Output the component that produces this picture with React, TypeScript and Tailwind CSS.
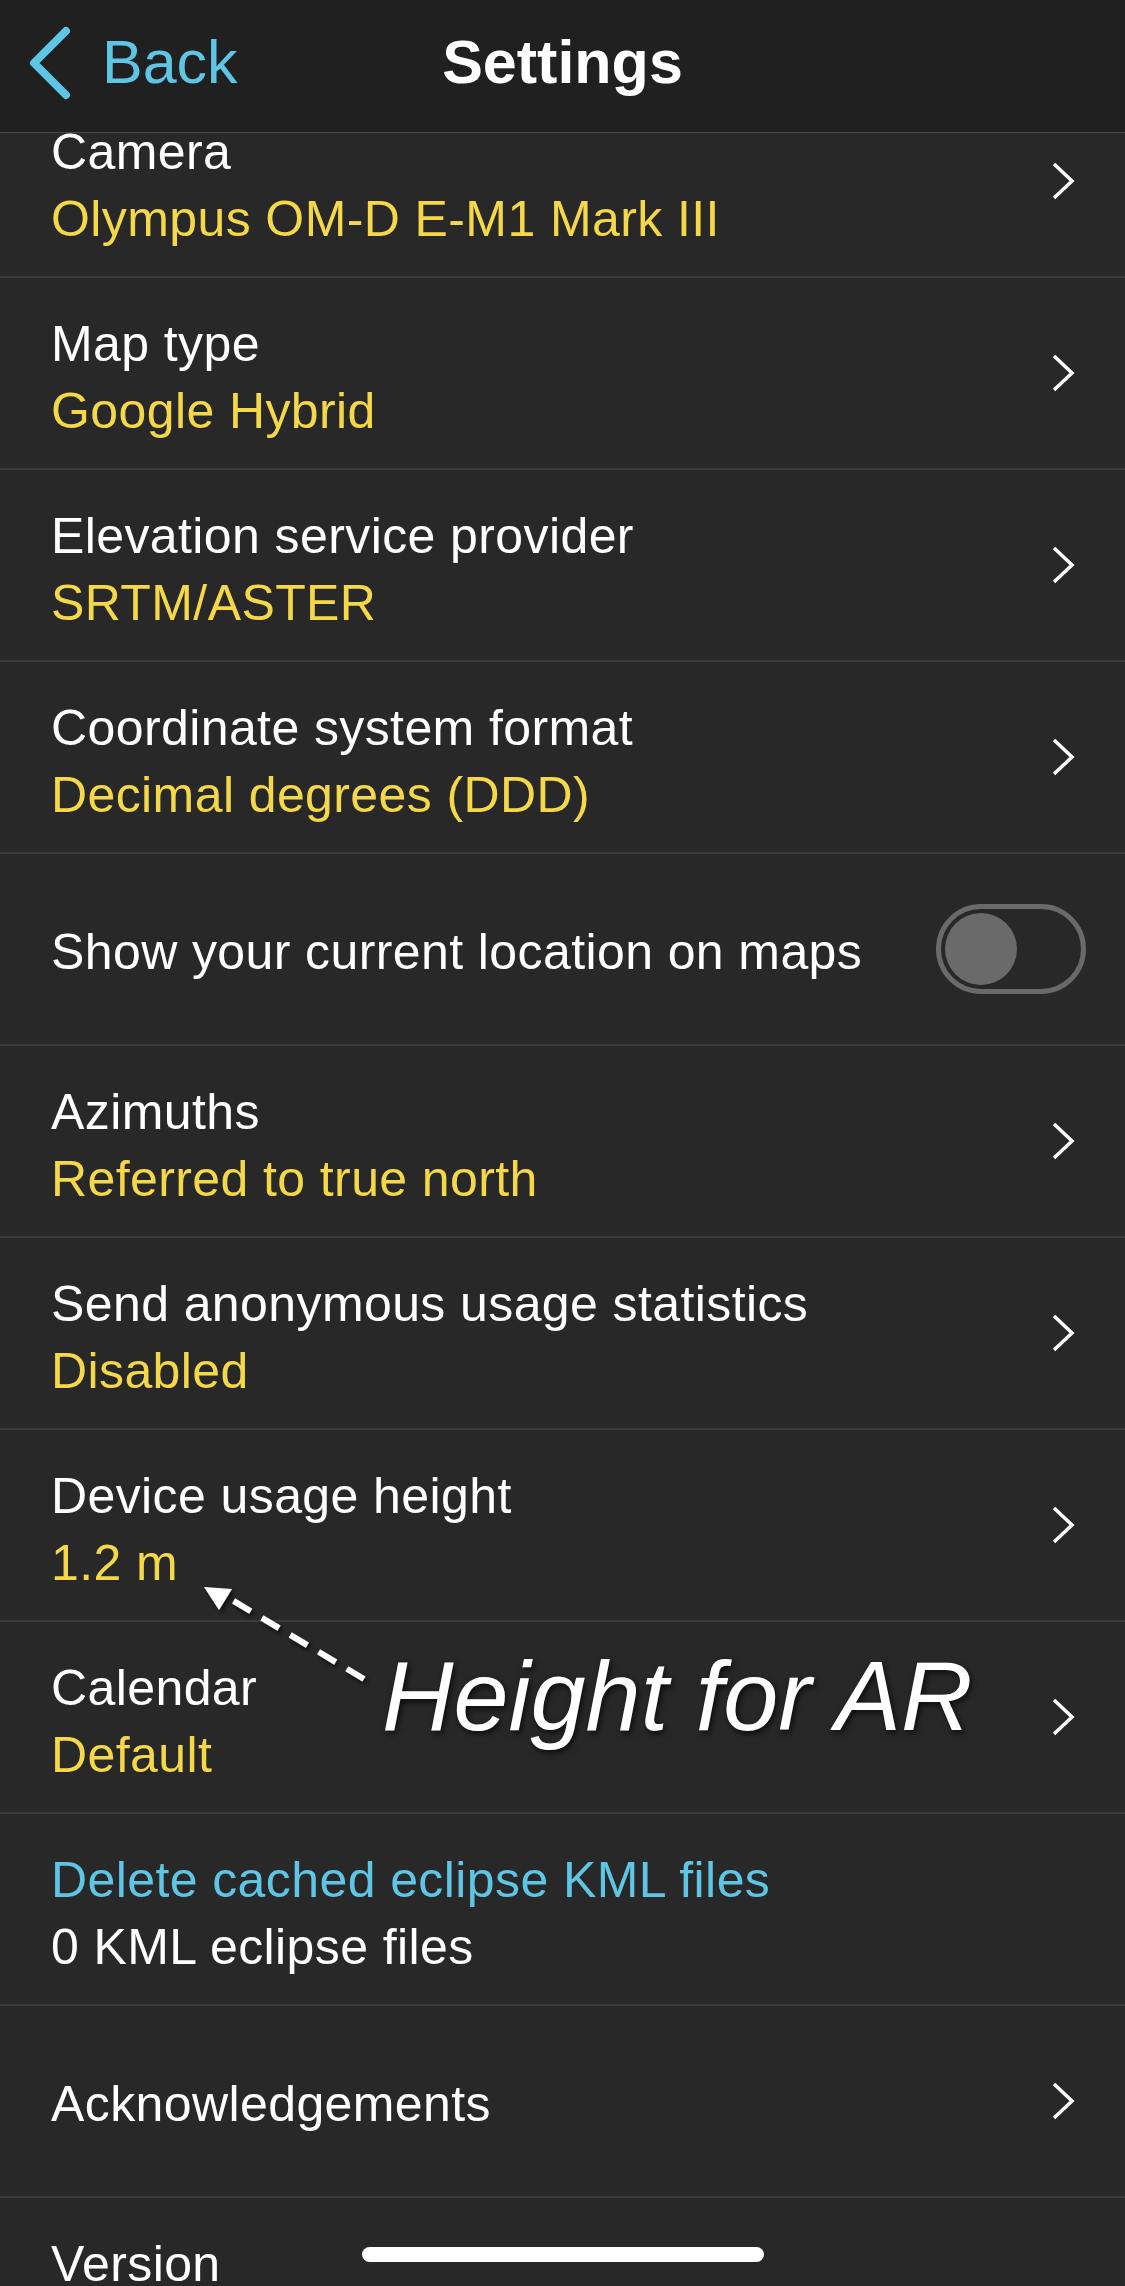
import { Fragment } from "react"

type Item = {
  title: string
  value?: string
  kind?: "chevron" | "toggle" | "action" | "none"
}

const ITEMS: Item[] = [
  { title: "Camera", value: "Olympus OM-D E-M1 Mark III" },
  { title: "Map type", value: "Google Hybrid" },
  { title: "Elevation service provider", value: "SRTM/ASTER" },
  { title: "Coordinate system format", value: "Decimal degrees (DDD)" },
  { title: "Show your current location on maps", kind: "toggle" },
  { title: "Azimuths", value: "Referred to true north" },
  { title: "Send anonymous usage statistics", value: "Disabled" },
  { title: "Device usage height", value: "1.2 m" },
  { title: "Calendar", value: "Default" },
  { title: "Delete cached eclipse KML files", value: "0 KML eclipse files", kind: "action" },
  { title: "Acknowledgements" },
  { title: "Version", value: "\u00a0", kind: "none" },
]

function Chevron() {
  return (
    <svg width="24" height="38" viewBox="0 0 24 38" className="shrink-0">
      <polyline points="3,2 21,19 3,36" fill="none" stroke="#ffffff" strokeWidth="3.5" />
    </svg>
  )
}

function Toggle() {
  return (
    <div className="-mr-[11px] flex h-[90px] w-[150px] shrink-0 items-center rounded-full border-[5px] border-[#6a6a6a] pl-[4px]">
      <div className="h-[72px] w-[72px] rounded-full bg-[#6a6a6a]" />
    </div>
  )
}

function Row({ item, first }: { item: Item; first?: boolean }) {
  const kind = item.kind ?? "chevron"
  const isAction = kind === "action"
  return (
    <div
      className={
        "flex h-[192px] items-center border-b-2 border-[#3a3a3a] pl-[51px] pr-[50px]" +
        (first ? " -mt-[47px]" : "")
      }
    >
      <div className={"flex-1 text-[50px] leading-[67px] tracking-[0.4px] " + (item.value ? "mt-[9px]" : "mt-[6px]")}>
        <div className={isAction ? "text-[#5fc5e5]" : "text-white"}>{item.title}</div>
        {item.value && <div className={isAction ? "text-white" : "text-[#f4d84a]"}>{item.value}</div>}
      </div>
      {kind === "chevron" && <Chevron />}
      {kind === "toggle" && <Toggle />}
    </div>
  )
}

function App() {
  return (
    <div
      className="relative h-[2286px] w-[1125px] overflow-hidden bg-[#282828]"
      style={{ fontFamily: '"Liberation Sans", Arial, sans-serif' }}
    >
      <header className="relative z-10 grid h-[133px] grid-cols-[1fr_auto_1fr] items-center border-b border-[#4a4a4a] bg-[#202020] pb-[7px]">
        <div className="flex items-center gap-[28px] pl-[28px]">
          <svg width="46" height="74" viewBox="0 0 46 74">
            <polyline
              points="38,5 6,37 38,69"
              fill="none"
              stroke="#5fc5e5"
              strokeWidth="8"
              strokeLinecap="round"
              strokeLinejoin="round"
            />
          </svg>
          <span className="text-[61px] leading-none text-[#5fc5e5]">Back</span>
        </div>
        <h1 className="text-[61px] font-bold leading-none text-white">Settings</h1>
        <div />
      </header>

      <main>
        {ITEMS.map((item, i) => (
          <Fragment key={item.title}>
            <Row item={item} first={i === 0} />
          </Fragment>
        ))}
      </main>

      {/* annotation over the Calendar row */}
      <svg className="absolute left-0 top-0" width="1125" height="2286" viewBox="0 0 1125 2286">
        <defs>
          <filter id="sh" x="-20%" y="-20%" width="140%" height="140%">
            <feDropShadow dx="2" dy="3" stdDeviation="2" floodColor="#000" floodOpacity="0.7" />
          </filter>
        </defs>
        <g filter="url(#sh)">
          <line x1="364" y1="1679" x2="232" y2="1600" stroke="#fff" strokeWidth="6" strokeDasharray="20 13" />
          <polygon points="204,1587 232,1589 219,1610" fill="#fff" />
        </g>
      </svg>
      <div className="absolute left-[382px] top-[1646px] text-[99px] italic leading-[99px] text-white drop-shadow-[2px_3px_3px_rgba(0,0,0,0.7)]">
        Height for AR
      </div>

      <div className="absolute bottom-[24px] left-[362px] h-[15px] w-[402px] rounded-full bg-white" />
    </div>
  )
}

export default App
